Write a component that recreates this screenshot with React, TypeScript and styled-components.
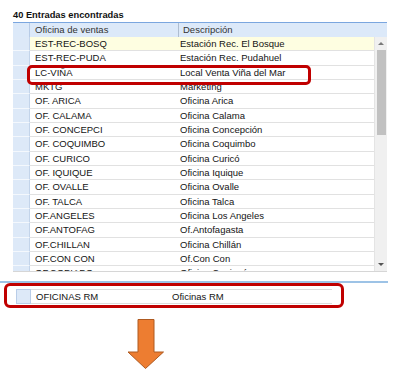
import styled, { createGlobalStyle } from "styled-components";

const GlobalStyle = createGlobalStyle`
  html, body { margin: 0; padding: 0; background: #fff; }
  body { font-family: "Liberation Sans", Arial, sans-serif; color: #141414; }
  * { box-sizing: border-box; }
`;

type Entry = { code: string; name: string; hilite?: boolean };

const entries: Entry[] = [
  { code: "EST-REC-BOSQ", name: "Estación Rec. El Bosque", hilite: true },
  { code: "EST-REC-PUDA", name: "Estación Rec. Pudahuel" },
  { code: "LC-VIÑA", name: "Local Venta Viña del Mar" },
  { code: "MKTG", name: "Marketing" },
  { code: "OF. ARICA", name: "Oficina Arica" },
  { code: "OF. CALAMA", name: "Oficina Calama" },
  { code: "OF. CONCEPCI", name: "Oficina Concepción" },
  { code: "OF. COQUIMBO", name: "Oficina Coquimbo" },
  { code: "OF. CURICO", name: "Oficina Curicó" },
  { code: "OF. IQUIQUE", name: "Oficina Iquique" },
  { code: "OF. OVALLE", name: "Oficina Ovalle" },
  { code: "OF. TALCA", name: "Oficina Talca" },
  { code: "OF.ANGELES", name: "Oficina Los Angeles" },
  { code: "OF.ANTOFAG", name: "Of.Antofagasta" },
  { code: "OF.CHILLAN", name: "Oficina Chillán" },
  { code: "OF.CON CON", name: "Of.Con Con" },
  { code: "OF.COPIAPO", name: "Oficina Copiapó" },
];

function App() {
  return (
    <>
      <GlobalStyle />
      <Page>
        <Title>40 Entradas encontradas</Title>
        <Grid>
          <Header>
            <HeaderSelector />
            <HeaderCell $width={149}>Oficina de ventas</HeaderCell>
            <HeaderCell>Descripción</HeaderCell>
          </Header>
          <Body>
            <Rows>
              {entries.map((e) => (
                <Row key={e.code} $hilite={e.hilite}>
                  <Selector />
                  <Cell $width={149} $pad={5}>{e.code}</Cell>
                  <Cell $pad={1}>{e.name}</Cell>
                </Row>
              ))}
              <Callout />
            </Rows>
            <Scrollbar>
              <ScrollButton>
                <Triangle $up />
              </ScrollButton>
              <Thumb />
              <Track />
              <ScrollButton>
                <Triangle />
              </ScrollButton>
            </Scrollbar>
          </Body>
        </Grid>
        <Divider />
        <PickedBox>
          <PickedRow>
            <PickedSelector />
            <PickedCell $width={136}>OFICINAS RM</PickedCell>
            <PickedCell $width={165}>Oficinas RM</PickedCell>
          </PickedRow>
        </PickedBox>
        <ArrowWrap>
          <svg width="38" height="52" viewBox="0 0 38 52">
            <polygon
              points="11,1.5 27,1.5 27,34 36.5,34 18.5,50.5 1,34 11,34"
              fill="#ed7d31"
              stroke="#ae5a21"
              strokeWidth="1"
            />
          </svg>
        </ArrowWrap>
      </Page>
    </>
  );
}

export default App;

const Page = styled.div`
  width: 398px;
  height: 372px;
  overflow: hidden;
  display: flex;
  flex-direction: column;
`;

const Title = styled.div`
  padding: 9px 0 0 13px;
  height: 22px;
  line-height: 13px;
  font-size: 9.3px;
  font-weight: bold;
  color: #111;
`;

const Grid = styled.div`
  margin-left: 13px;
  width: 374px;
  display: flex;
  flex-direction: column;
`;

const Header = styled.div`
  display: flex;
  height: 15px;
  border-top: 1px solid #7aa6df;
  background: #dce9f9;
  font-size: 9.5px;
  color: #333;
`;

const HeaderSelector = styled.div`
  width: 17px;
  border-right: 1px solid #b7cbe6;
`;

const HeaderCell = styled.div<{ $width?: number }>`
  ${(p) => (p.$width ? `width: ${p.$width}px;` : "flex: 1;")}
  padding-left: ${(p) => (p.$width ? 5 : 4)}px;
  line-height: 14px;
  border-right: ${(p) => (p.$width ? "1px solid #aebdd0" : "none")};
  white-space: nowrap;
`;

const Body = styled.div`
  display: flex;
  height: 235px;
  border-bottom: 1px solid #d6d6d6;
`;

const Rows = styled.div`
  position: relative;
  width: 361px;
  overflow: hidden;
`;

const Row = styled.div<{ $hilite?: boolean }>`
  display: flex;
  height: 14.33px;
  font-size: 9.5px;
  background: ${(p) => (p.$hilite ? "#fefee1" : "#fff")};
`;

const Selector = styled.div`
  width: 17px;
  background: #dde9f8;
  border-right: 1px solid #c3d4ea;
  border-bottom: 1px solid #f4f8fd;
`;

const Cell = styled.div<{ $width?: number; $pad: number }>`
  ${(p) => (p.$width ? `width: ${p.$width}px;` : "flex: 1;")}
  padding-left: ${(p) => p.$pad}px;
  line-height: 13.33px;
  border-bottom: 1px solid #e1e1e1;
  white-space: nowrap;
  overflow: hidden;
`;

const Callout = styled.div`
  position: absolute;
  left: 14px;
  top: 28px;
  width: 284px;
  height: 20px;
  border: 3px solid #c00000;
  border-radius: 5px;
  background: linear-gradient(to bottom, transparent 0 13px, #fff 13px);
`;

const Scrollbar = styled.div`
  width: 13px;
  display: flex;
  flex-direction: column;
  align-items: center;
  background: #f0f0f0;
  border-left: 1px solid #e4e4e4;
`;

const ScrollButton = styled.div`
  height: 13px;
  width: 100%;
  display: flex;
  align-items: center;
  justify-content: center;
`;

const Triangle = styled.div<{ $up?: boolean }>`
  width: 0;
  height: 0;
  border-left: 3px solid transparent;
  border-right: 3px solid transparent;
  ${(p) =>
    p.$up ? "border-bottom: 3px solid #7a7a7a;" : "border-top: 3px solid #555;"}
`;

const Thumb = styled.div`
  width: 9px;
  height: 85px;
  background: #c1c1c1;
`;

const Track = styled.div`
  flex: 1;
`;

const Divider = styled.div`
  margin-top: 9px;
  width: 388px;
  height: 2px;
  background: #9dc3e6;
`;

const PickedBox = styled.div`
  margin-left: 4px;
  width: 340px;
  height: 25px;
  padding: 3px 0 0 9px;
  border: 3px solid #c00000;
  border-radius: 6px;
`;

const PickedRow = styled.div`
  display: flex;
  height: 15px;
  font-size: 9.5px;
`;

const PickedSelector = styled.div`
  width: 15px;
  background: #dde9f8;
  border: 1px solid #b9cde8;
`;

const PickedCell = styled.div<{ $width: number }>`
  width: ${(p) => p.$width}px;
  padding-left: 5px;
  line-height: 13px;
  border-top: 1px solid #dcdcdc;
  border-bottom: 1px solid #dcdcdc;
  white-space: nowrap;
`;

const ArrowWrap = styled.div`
  margin: 10px 0 0 127px;
  height: 52px;
  display: flex;
`;
